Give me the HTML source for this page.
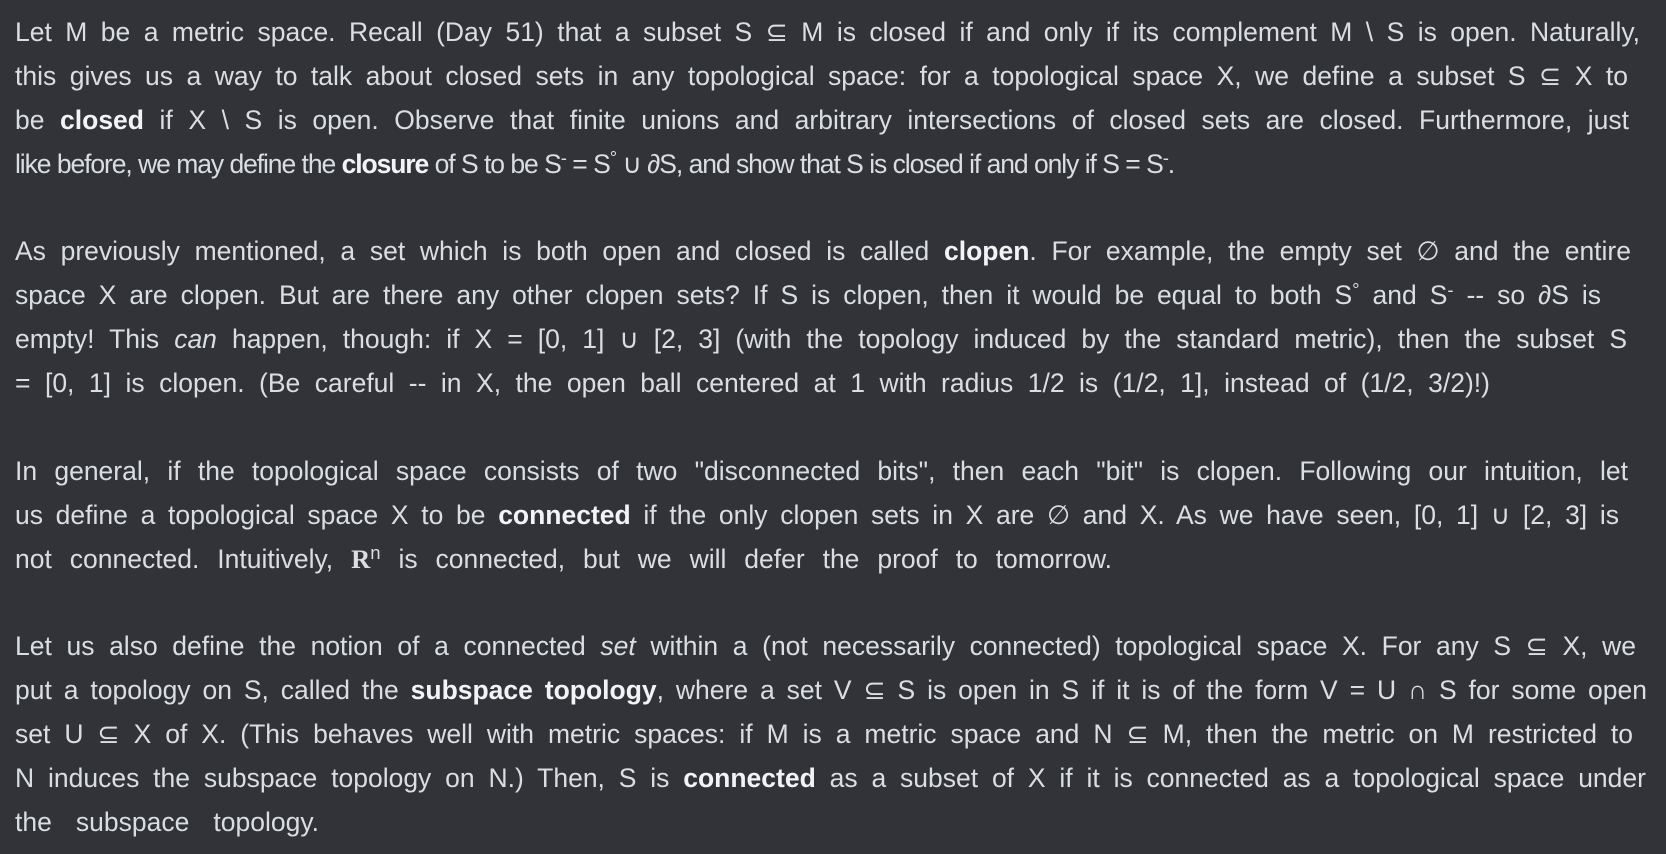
<!DOCTYPE html>
<html><head><meta charset="utf-8"><style>
html,body{margin:0;padding:0;background:#313338;width:1666px;height:854px;overflow:hidden}
.w{position:absolute;left:15px;top:11px;color:#dbdee1;font-family:"Liberation Sans","DejaVu Sans",sans-serif;font-size:26.5px;line-height:43.9px}
.l{white-space:nowrap;text-align:justify;text-align-last:justify;height:43.9px}
.e{white-space:nowrap;height:43.9px}
b{font-weight:bold;color:#f2f3f5}
.bb{height:43.9px}
sup{vertical-align:0;position:relative;top:-0.45em;font-size:0.7em;line-height:0}
.R{font-family:"Liberation Serif",serif;font-weight:bold}
</style></head><body><div class="w">
<div class="l" style="width:1625px">Let M be a metric space. Recall (Day 51) that a subset S ⊆ M is closed if and only if its complement M \ S is open. Naturally,</div>
<div class="l" style="width:1613px">this gives us a way to talk about closed sets in any topological space: for a topological space X, we define a subset S ⊆ X to</div>
<div class="l" style="width:1614px">be <b>closed</b> if X \ S is open. Observe that finite unions and arbitrary intersections of closed sets are closed. Furthermore, just</div>
<div class="l" style="width:1159px;letter-spacing:-1.1px;word-spacing:-1px">like before, we may define the <b>closure</b> of S to be S<sup>-</sup> = S<sup>°</sup> ∪ ∂S, and show that S is closed if and only if S = S<sup>-</sup>.</div>
<div class="bb"></div>
<div class="l" style="width:1616px">As previously mentioned, a set which is both open and closed is called <b>clopen</b>. For example, the empty set ∅ and the entire</div>
<div class="l" style="width:1586px">space X are clopen. But are there any other clopen sets? If S is clopen, then it would be equal to both S<sup>°</sup> and S<sup>-</sup> -- so ∂S is</div>
<div class="l" style="width:1612px">empty! This <i>can</i> happen, though: if X = [0, 1] ∪ [2, 3] (with the topology induced by the standard metric), then the subset S</div>
<div class="l" style="width:1475px">= [0, 1] is clopen. (Be careful -- in X, the open ball centered at 1 with radius 1/2 is (1/2, 1], instead of (1/2, 3/2)!)</div>
<div class="bb"></div>
<div class="l" style="width:1613px">In general, if the topological space consists of two "disconnected bits", then each "bit" is clopen. Following our intuition, let</div>
<div class="l" style="width:1604px">us define a topological space X to be <b>connected</b> if the only clopen sets in X are ∅ and X. As we have seen, [0, 1] ∪ [2, 3] is</div>
<div class="l" style="width:1097px">not connected. Intuitively, <span class="R">R</span><sup>n</sup> is connected, but we will defer the proof to tomorrow.</div>
<div class="bb"></div>
<div class="l" style="width:1621px">Let us also define the notion of a connected <i>set</i> within a (not necessarily connected) topological space X. For any S ⊆ X, we</div>
<div class="l" style="width:1632px">put a topology on S, called the <b>subspace topology</b>, where a set V ⊆ S is open in S if it is of the form V = U ∩ S for some open</div>
<div class="l" style="width:1618px">set U ⊆ X of X. (This behaves well with metric spaces: if M is a metric space and N ⊆ M, then the metric on M restricted to</div>
<div class="l" style="width:1631px">N induces the subspace topology on N.) Then, S is <b>connected</b> as a subset of X if it is connected as a topological space under</div>
<div class="l" style="width:304px">the subspace topology.</div>
</div></body></html>
